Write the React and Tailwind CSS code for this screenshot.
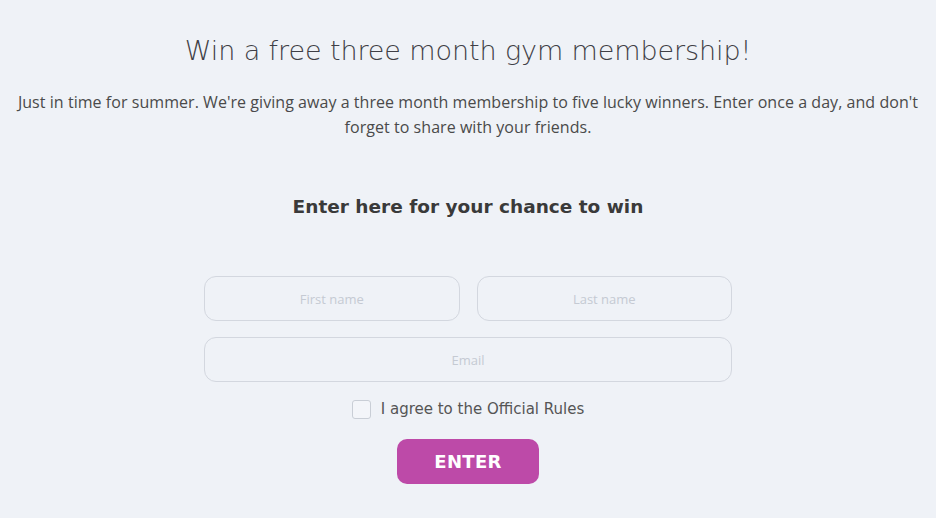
import React, { useState } from "react";

const App = () => {
  const [agree, setAgree] = useState(false);
  const [form, setForm] = useState({ first: "", last: "", email: "" });

  const update = (key) => (e) => setForm({ ...form, [key]: e.target.value });

  return (
    <div className="min-h-[518px] w-full bg-[#eff2f7] text-[#444] font-['DejaVu_Sans',sans-serif]">
      <div className="flex flex-col items-center pt-[34px]">
        <h1 className="text-[27px] leading-[34px] font-light tracking-[-0.1px] text-[#3f3f46]">
          Win a free three month gym membership!
        </h1>
        <p className="mt-[22px] px-2 text-center text-[16px] leading-[25px] tracking-[0.05px] text-[#4a4a4a] font-['Open_Sans',sans-serif]">
          Just in time for summer. We're giving away a three month membership to
          five lucky winners. Enter once a day, and don't forget to share with
          your friends.
        </p>
        <h2 className="mt-[53px] text-[18.5px] leading-[28px] font-bold text-[#3a3a3a]">
          Enter here for your chance to win
        </h2>

        <form
          className="mt-[55px] w-[528px] flex flex-col"
          onSubmit={(e) => e.preventDefault()}
        >
          <div className="flex gap-[17px]">
            <input
              value={form.first}
              onChange={update("first")}
              placeholder="First name"
              className="h-[45px] flex-1 min-w-0 rounded-xl border border-[#d3d7df] bg-transparent text-center text-[13px] text-[#444] placeholder:text-[#c5cad3] outline-none font-['Open_Sans',sans-serif]"
            />
            <input
              value={form.last}
              onChange={update("last")}
              placeholder="Last name"
              className="h-[45px] flex-1 min-w-0 rounded-xl border border-[#d3d7df] bg-transparent text-center text-[13px] text-[#444] placeholder:text-[#c5cad3] outline-none font-['Open_Sans',sans-serif]"
            />
          </div>
          <input
            value={form.email}
            onChange={update("email")}
            placeholder="Email"
            className="mt-[16px] h-[45px] w-full rounded-xl border border-[#d3d7df] bg-transparent text-center text-[13px] text-[#444] placeholder:text-[#c5cad3] outline-none font-['Open_Sans',sans-serif]"
          />

          <label className="mt-[17px] flex items-center justify-center gap-[10px] cursor-pointer select-none">
            <span
              onClick={() => setAgree(!agree)}
              className={`h-[19px] w-[19px] rounded-[3px] border border-[#c9ced6] flex items-center justify-center ${
                agree ? "bg-[#bd4aa8] border-[#bd4aa8]" : "bg-[#f3f5f9]"
              }`}
            >
              {agree && (
                <svg width="12" height="12" viewBox="0 0 24 24" fill="none" stroke="white" strokeWidth="3">
                  <path d="M5 12l5 5L20 7" />
                </svg>
              )}
            </span>
            <span className="text-[15px] leading-[20px] text-[#555]">
              I agree to the Official Rules
            </span>
          </label>

          <div className="mt-[20px] flex justify-center">
            <button
              type="submit"
              className="h-[45px] w-[142px] rounded-[10px] bg-[#bd4aa8] text-white text-[18px] font-bold tracking-[0.3px]"
            >
              ENTER
            </button>
          </div>
        </form>
      </div>
    </div>
  );
};

export default App;
